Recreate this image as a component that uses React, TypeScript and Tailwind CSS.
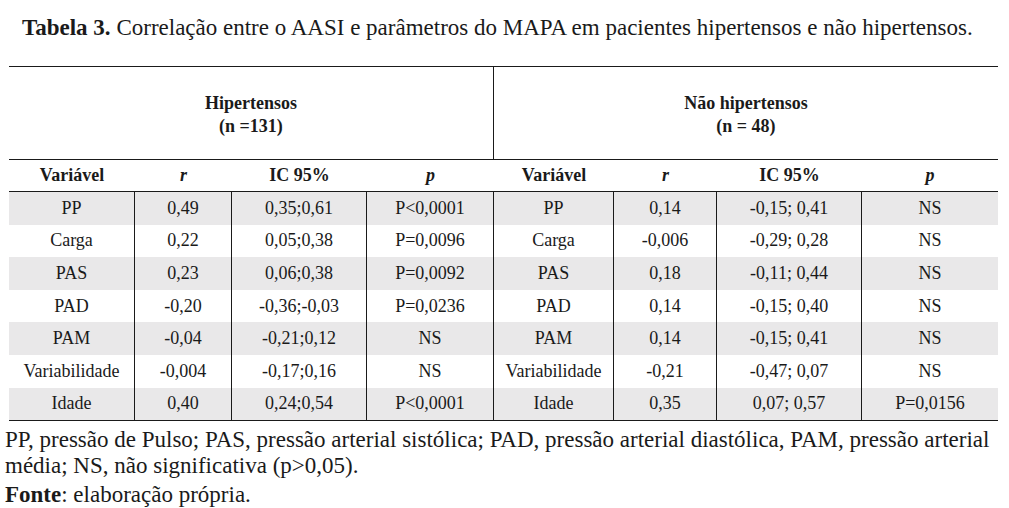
import React from "react";

const cols = ["w-[126px]", "w-[97px]", "w-[135px]", "w-[127px]", "w-[120px]", "w-[103px]", "w-[145px]", "w-[136px]"];

const rows: string[][] = [
  ["PP", "0,49", "0,35;0,61", "P<0,0001", "PP", "0,14", "-0,15; 0,41", "NS"],
  ["Carga", "0,22", "0,05;0,38", "P=0,0096", "Carga", "-0,006", "-0,29; 0,28", "NS"],
  ["PAS", "0,23", "0,06;0,38", "P=0,0092", "PAS", "0,18", "-0,11; 0,44", "NS"],
  ["PAD", "-0,20", "-0,36;-0,03", "P=0,0236", "PAD", "0,14", "-0,15; 0,40", "NS"],
  ["PAM", "-0,04", "-0,21;0,12", "NS", "PAM", "0,14", "-0,15; 0,41", "NS"],
  ["Variabilidade", "-0,004", "-0,17;0,16", "NS", "Variabilidade", "-0,21", "-0,47; 0,07", "NS"],
  ["Idade", "0,40", "0,24;0,54", "P<0,0001", "Idade", "0,35", "0,07; 0,57", "P=0,0156"],
];

const heads = ["Variável", "r", "IC 95%", "p", "Variável", "r", "IC 95%", "p"];

export default function App() {
  return (
    <div className="w-[1009px] h-[508px] bg-white text-[#1a1a1a] overflow-hidden font-['Liberation_Serif','Times_New_Roman',serif]">
      <div className="pl-[22px] pt-[13px] h-[66px] text-[23px] leading-[29px] whitespace-nowrap">
        <span className="font-bold">Tabela 3.</span> Correlação entre o AASI e parâmetros do MAPA em pacientes hipertensos e não hipertensos.
      </div>
      <div className="ml-[9px] w-[989px] border-t border-b border-[#1a1a1a]">
        <div className="flex h-[93px] border-b border-[#1a1a1a]">
          <div className="w-[485px] border-r border-[#1a1a1a] flex flex-col items-center justify-center font-bold text-[18px] leading-[23px] pt-[4px]">
            <div>Hipertensos</div>
            <div>(n =131)</div>
          </div>
          <div className="flex-1 flex flex-col items-center justify-center font-bold text-[18px] leading-[23px] pt-[4px]">
            <div>Não hipertensos</div>
            <div>(n = 48)</div>
          </div>
        </div>
        <div className="flex h-[32px] border-b border-[#1a1a1a] font-bold text-[18px]">
          {heads.map((h, i) => (
            <div key={i} className={`${cols[i]} flex items-center justify-center ${h === "r" || h === "p" ? "italic" : ""}`}>
              {h}
            </div>
          ))}
        </div>
        {rows.map((r, ri) => (
          <div key={ri} className={`flex h-[32.6px] text-[18px] ${ri % 2 === 0 ? "bg-[#e9e8e9]" : "bg-white"}`}>
            {r.map((c, ci) => (
              <div
                key={ci}
                className={`${cols[ci]} flex items-center justify-center ${ci < 7 ? "border-r border-[#1a1a1a]" : ""}`}
              >
                {c}
              </div>
            ))}
          </div>
        ))}
      </div>
      <div className="pl-[5px] pt-[6px] text-[23px] leading-[26px] whitespace-nowrap">
        <div>PP, pressão de Pulso; PAS, pressão arterial sistólica; PAD, pressão arterial diastólica, PAM, pressão arterial</div>
        <div>média; NS, não significativa (p&gt;0,05).</div>
        <div className="mt-[3px]">
          <span className="font-bold">Fonte</span>: elaboração própria.
        </div>
      </div>
    </div>
  );
}
